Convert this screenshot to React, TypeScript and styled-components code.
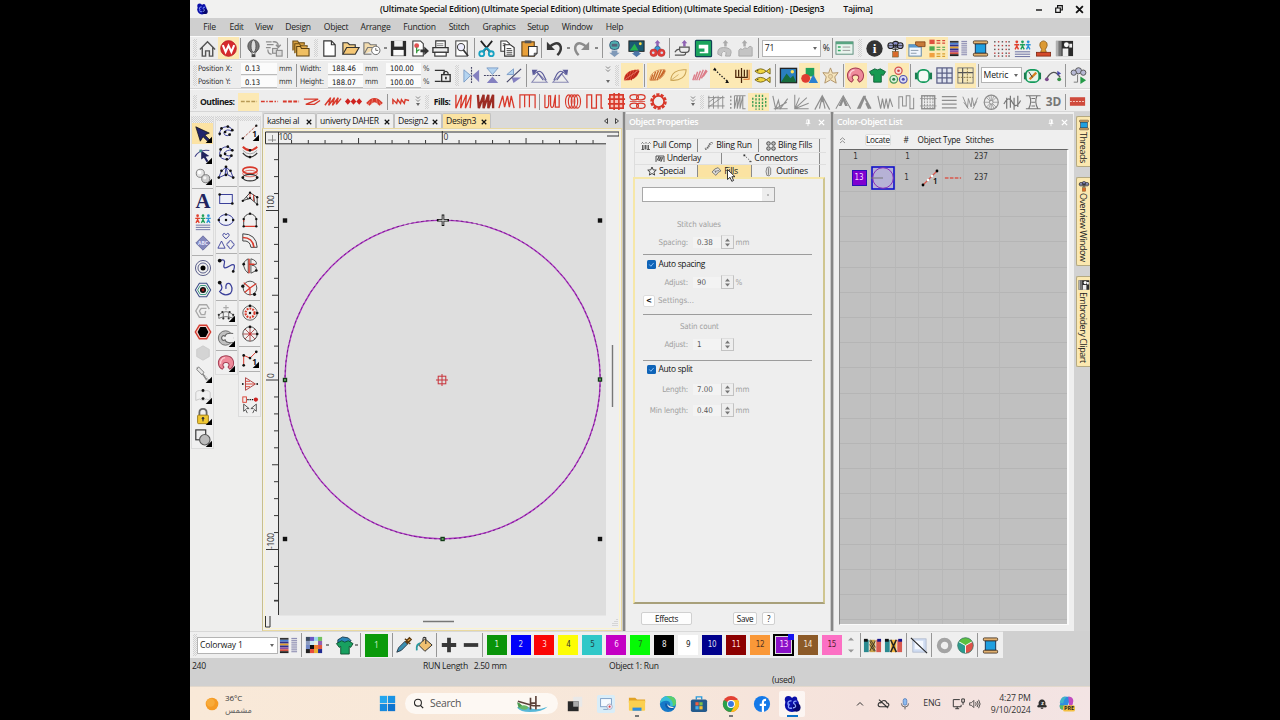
import React from 'react';
import styled, { createGlobalStyle } from 'styled-components';

const Global = createGlobalStyle`
  * { box-sizing: border-box; }
  body { margin: 0; background: #000; overflow: hidden; }
`;

const ui = `"Open Sans", "Noto Sans", sans-serif`;
const tahoma = `"DejaVu Sans Condensed", "DejaVu Sans", sans-serif`;

/* ---------- drawing helpers for 20x20 icons ---------- */
type Shape = (k: number) => React.ReactElement;
const p = (d: string, stroke = 'none', sw = 1, fill = 'none', dash?: string): Shape => (k) => (
  <path key={k} d={d} stroke={stroke} strokeWidth={sw} fill={fill} strokeDasharray={dash} />
);
const f = (d: string, fill: string): Shape => p(d, 'none', 0, fill);
const c = (x: number, y: number, r: number, fill = 'none', stroke = 'none', sw = 1, dash?: string): Shape => (k) => (
  <circle key={k} cx={x} cy={y} r={r} fill={fill} stroke={stroke} strokeWidth={sw} strokeDasharray={dash} />
);
const e = (x: number, y: number, rx: number, ry: number, fill = 'none', stroke = 'none', sw = 1): Shape => (k) => (
  <ellipse key={k} cx={x} cy={y} rx={rx} ry={ry} fill={fill} stroke={stroke} strokeWidth={sw} />
);
const r = (x: number, y: number, w: number, h: number, fill = 'none', stroke = 'none', sw = 1, rx = 0): Shape => (k) => (
  <rect key={k} x={x} y={y} width={w} height={h} rx={rx} fill={fill} stroke={stroke} strokeWidth={sw} />
);
const t = (x: number, y: number, s: string, size: number, fill: string, family = 'Open Sans', weight = 700): Shape => (k) => (
  <text key={k} x={x} y={y} fontSize={size} fill={fill} fontFamily={family} fontWeight={weight} textAnchor="middle" letterSpacing="0">{s}</text>
);
const dots = (pts: number[][], fill = '#111', rad = 1.5): Shape[] => pts.map(([x, y]) => c(x, y, rad, fill));

const RED = '#d8392b', GRY = '#8e8e8e', BLU = '#3a3f9a', NAVY = '#22245e';
const leaf = 'M2 15C2 8 8 3 18 4C18 11 12 16 2 15Z';
const hatch = 'M3 15L5 9M5 15L8 6M7 15L11 5M9.5 15L14 4M12 13L17 4M14 11L18 5';
const shirt = 'M7 3L1.5 6L4 10L6 9V17H14V9L16 10L18.5 6L13 3Q10 5 7 3Z';
const corner = f('M20 13V20H13Z', '#000');
const people = (y: number): Shape[] =>
  [['#e0402e', 4], ['#1fa05a', 10], ['#2a93d8', 16]].flatMap(([col, x]) => [
    c(x as number, y, 1.5, col as string),
    p(`M${(x as number) - 2.6} ${y + 3}H${(x as number) + 2.6}M${x} ${y + 2}V${y + 5}M${x} ${y + 4.5}L${(x as number) - 1.8} ${y + 8}M${x} ${y + 4.5}L${(x as number) + 1.8} ${y + 8}`, col as string, 1.5),
  ]);
const horseshoe = [
  f('M10 1.5C15.5 1.5 19 5.5 19 10C19 13.5 17 16.5 14 17.5L11.5 14.5C13.5 13 13.5 10 10 10S6.5 13 8.5 14.5L6 17.5C3 16.5 1 13.5 1 10C1 5.5 4.5 1.5 10 1.5Z', '#a23a50'),
  f('M10 2.5C15 2.5 18 6 18 10C18 13 16.3 15.5 14.2 16.3L12.8 14.5C15 12.5 14 8.8 10 8.8S5 12.5 7.2 14.5L5.8 16.3C3.7 15.5 2 13 2 10C2 6 5 2.5 10 2.5Z', '#ee8a9a'),
  p('M4 11C3.5 7.5 5.5 4.5 9 4', '#fbd0d6', 1.4),
];
const barsH = [2, 4, 6, 8, 10, 12, 14, 16];
const threads: Shape[] = [
  ...barsH.map((y, i) => r(1, y, 9, 2, ['#333', '#4a7fd0', '#30308a', '#e0a030', '#30308a', '#9050a0', '#d05040', '#222'][i])),
  ...barsH.map((y) => r(13, y, 6, 1.1, '#8a8ab0')),
];
const bust: Shape[] = [
  p('M10 10V14', '#333', 1), r(7, 13, 6, 6, '#d96b2b', '#552', 0.5),
  c(10, 6, 3.5, '#8b8ecb', '#222', 1.1), c(5, 7, 3, '#9ea4cf', '#222', 1.1), c(15, 7, 3, '#9ea4cf', '#222', 1.1), c(10, 7, 1.5, '#333'), p('M2 7H18M7 11L13 11', '#222', 0.8),
];
const upArrow = (x: number, col = '#8f62b4') => f(`M${x} 1L${x + 3} 4.5H${x + 1.3}V8H${x - 1.3}V4.5H${x - 3}Z`, col);
const spool = [r(4.5, 5, 11, 10, '#1f9fe0', '#124', 0.9), r(2.5, 2, 15, 3, '#e0b070', '#432', 0.9, 1), r(2.5, 15, 15, 3, '#e0b070', '#432', 0.9, 1)];

const ICONS: Record<string, Shape[]> = {
  app: [c(10, 11, 8, '#0a0fa8'), c(6, 5, 4, '#0a0fa8'), c(13, 4.5, 2.8, '#0a0fa8'), c(15, 14, 4.5, '#06066e'), p('M9.5 6.5Q5 6 5.5 10Q8 10 6 12Q5.5 15.5 10 14.5M15 7Q11 6.5 12 9.5Q15 11.5 13.5 13.5Q12.5 14.5 11 14', '#8ea6ff', 1.4)],
  home: [p('M2 11L10 3L18 11M4.5 9V18H8V12.5H12V18H15.5V9', '#555', 1.5)],
  w: [c(10, 10, 8.3, '#d62a2e', '#b51c22', 0.7), p('M4 6.5L7 13.5L10 7L13 13.5L16 6.5', '#fff', 2.2)],
  balloon: [e(10, 7.5, 6, 6.5, '#777', '#444', 0.8), e(10, 7.5, 2.6, 6.5, '#ddd', '#444', 0.8), p('M6 12L9 16M14 12L11 16', '#444', 0.8), r(8, 16, 4, 3, '#444')],
  convert: [p('M1 3H7M2 6H9M1 9H6', GRY, 1.4), p('M8 3Q14 2 14 8M11.5 6L14 9L16.5 6', GRY, 1.4), r(8, 10, 5, 5, '#ddd', GRY, 1.2), r(12, 12, 6, 6, '#ddd', GRY, 1.2), p('M3 11Q3 16 7 16', GRY, 1.3)],
  folders: [p('M2 12V2H7L8 4H14V6', '#6b4a10', 1.1, '#d8a040'), p('M4 15V5H9L10 7H17V9', '#6b4a10', 1.1, '#e4ae4c'), p('M6 18V8H10L11 10H19V18Z', '#5c4010', 1.1, '#f0bf62')],
  new: [p('M4 2H12L16 6V18H4ZM12 2V6H16', '#333', 1.2, '#fff')],
  open: [p('M2 16V4H7L9 6H15V9', '#333', 1.2, '#f5cf86'), p('M2 16L6 9H19L15 16Z', '#333', 1.2, '#f5c775')],
  recent: [p('M2 16V4H7L9 6H15V9M2 16L6 9H18', '#777', 1.2, '#f3dcae'), p('M2 16H10', '#777', 1.2), c(14.5, 12, 4.4, '#fff', '#666', 1), p('M14.5 9.5V12H17', '#666', 1)],
  save: [f('M2 2H18V18H2Z', '#2b2b2b'), r(5.5, 2, 9, 6, '#eee'), r(4.5, 11.5, 11, 6, '#fafafa')],
  export: [p('M3 2H11L14 5V18H3Z', '#333', 1.1, '#fff'), c(7, 7, 2.6, '#e05050'), p('M7 9V15M7 13L10 11', '#3a9a40', 1.4), f('M11 11H15V8L20 12.5L15 17V14H11Z', '#333')],
  print: [p('M5 9V2H15V9', '#333', 1.2, '#fff'), p('M2 9H18V14H2Z', '#333', 1.4, '#eee'), r(4, 14, 12, 4, '#fff', '#333', 1.2), p('M6 5H13M6 7H13', '#555', 0.8)],
  preview: [r(4, 2, 12, 16, '#fff', '#444', 1.1), c(9.5, 8.5, 3.8, '#eef', '#444', 1.1), p('M12 11.5L17 18', '#333', 1.8)],
  cut: [p('M4 2L13 13M16 2L7 13', '#222', 1.8), c(5, 15.5, 2.6, 'none', '#18a2c2', 1.9), c(15, 15.5, 2.6, 'none', '#18a2c2', 1.9), p('M10 9L14 13M10 9L6 13', '#18a2c2', 2)],
  copy: [p('M3 2H9L12 5V13H3Z', '#333', 1.1, '#fff'), p('M7 6H13L17 9V18H7Z', '#333', 1.2, '#fff'), p('M9 10H14M9 12H15M9 14H15M9 16H15M5 5H8M5 7H7', '#333', 0.9)],
  paste: [r(2, 3, 13, 15, '#e8a03a', '#5c3c10', 1.1), r(5, 1.5, 7, 3, '#555'), p('M9 8H18V15L15 18H9Z', '#333', 1.1, '#fff'), p('M15 18V15H18', '#333', 1)],
  undo: [p('M5 8Q14 1 16.5 8Q17.5 13 13 17', '#383838', 2.6), f('M2 3V11.5H10.5Z', '#383838')],
  redo: [p('M15 8Q6 1 3.5 8Q2.5 13 7 17', '#8c8c8c', 2.6), f('M18 3V11.5H9.5Z', '#8c8c8c')],
  mach1: [r(5, 2, 10, 9, '#4eb0b0', '#357', 1, 4), r(7, 5, 6, 3, '#55627a'), f('M7 12H13V14.5H15.5L10 19L4.5 14.5H7Z', '#7f99b8')],
  mach2: [r(2, 2, 16, 11, '#1b5a72', '#222', 1), f('M3 12L8 5L12 12Z', '#28b450'), f('M7 13H13V15H15L10 19L5 15H7Z', '#4c76a8'), c(14, 5, 1.5, '#fd4')],
  mach3: [upArrow(10), c(10, 10.5, 3, '#3b9ad6', '#246', 0.6), c(6, 14.5, 4, '#df3d3a', '#a22', 0.5), c(14, 14.5, 4, '#df3d3a', '#a22', 0.5), c(5.5, 14.5, 1.4, '#cde'), c(14.5, 14.5, 1.4, '#cde')],
  cup: [upArrow(12), p('M7 8.5H17V11Q17 14 14 14H10Q7 14 7 11ZM2 14Q4 10 7 11M2 17H11Q14 17 13 14', '#555', 1.3)],
  sew: [r(1.5, 1.5, 17, 17, '#1aa35c', '#145', 1.2, 1), f('M5 6H15V15H6V13.5H11V10H5Z', '#fff')],
  up1: [upArrow(11, '#aaa'), p('M3 16Q2 9 9 9Q17 9 17 14L16 18H11Q13 13 9 13Q6 14 7 18Z', '#aaa', 1, '#c4c4c4')],
  up2: [upArrow(9, '#aaa'), p('M3 18V12Q4 9 7 11Q9 8 12 10Q15 6 17 9V18Z', '#aaa', 1, '#c4c4c4')],
  dialog: [r(1, 3, 18, 13, '#e9f4ee', '#5b8d7c', 1), r(1, 3, 18, 2.5, '#59a582'), p('M3 8.5H6M3 12H6', '#2fa860', 1.6), p('M8 8.5H16M8 12H16', '#999', 1)],
  info: [c(10, 10, 8.6, '#333'), t(10, 15, 'i', 14, '#fff', 'Liberation Serif')],
  bust,
  props: [r(2, 6, 13, 12, '#f0f6fd', '#5a84a8', 1), r(2, 6, 13, 3, '#5a98cc'), p('M4 12H12M4 15H10', '#89a', 1), p('M9 3H19V8L12 8L9 6Z', '#7a3c10', 0.8, '#c87a38')],
  list: [...[3, 10, 17].flatMap((y, i) => [r(1.5, y - 2.3, 5.5, 4.6, ['#e05040', '#50a850', '#f0a040'][i]), p(`M9 ${y - 1.3}H13M9 ${y + 1.3}H13M15 ${y - 1.3}H18M15 ${y + 1.3}H18`, ['#d84838', '#48a048', '#d8a030'][i], 1.2)])],
  threads, spool,
  dotgrid: [3, 7, 11, 15, 18].flatMap((y, j) => [3, 7, 11, 15, 18].map((x, i) => r(x - 0.8, y - 0.8, 1.5, 1.5, (i + j) % 2 ? '#c04040' : '#555'))),
  people: [...people(3), p('M2 13.5H18M2 16H18M2 18.5H18', '#666c9e', 1)],
  stamp: [p('M8 11Q5 7 6.5 4Q10 0 13.5 4Q15 7 12 11L13 14H7Z', '#8a5a18', 0.8, '#dc9a34'), r(2.5, 14, 15, 4, '#d44a2c', '#7c2410', 0.8)],
  clip: [r(1, 2, 18, 16, '#2a2a2a'), r(1, 2, 3, 16, '#b0b0b0'), r(4, 2, 3, 16, '#777'), r(8, 10, 6, 8, '#eee'), c(12, 6, 2.6, '#fafafa'), r(15, 5, 3, 4, '#eee')],
  lock2: [p('M1 4H12V8M1 17H8', '#333', 1.4), r(9, 9, 10, 8, '#eee', '#333', 1.6), p('M11.5 9V7Q14 3.5 16.5 7V9', '#333', 1.4), r(13, 11.5, 2, 3, '#333')],
  mirh: [p('M2 4L9 10L2 17Z', '#7498c4', 0.9, '#b4d4f0'), f('M18 4L11 10L18 17Z', '#8480c0'), p('M10 1V19', '#446', 1.2, 'none', '2 1')],
  mirv: [p('M4 2H16L10 9Z', '#7498c4', 0.9, '#b4d4f0'), f('M4 18H16L10 11Z', '#8480c0'), p('M1 10H19', '#446', 1.2, 'none', '2 1')],
  mird: [p('M3 9L10 3V9Z', '#7498c4', 0.9, '#b4d4f0'), f('M8 12H18L10 18Z', '#8480c0'), p('M3 17L18 3', '#446', 1.2)],
  rotl: [p('M2 17H18L9 8Z', '#8a8ab4', 1.1), p('M4 9Q10 2 14 9L17 15M7 6L14 15', '#5a5a9a', 1.2), f('M2 4L8 4L3 10Z', '#5a5a9a')],
  rotr: [p('M2 17H18L11 8Z', '#8a8ab4', 1.1), p('M16 9Q10 2 6 9L3 15M13 6L6 15', '#5a5a9a', 1.2), f('M18 4L12 4L17 10Z', '#5a5a9a')],
  leafA: [f(leaf, '#dd4a34'), p(hatch, '#b8241a', 1.2), p('M2 15L18 4', '#f4a090', 0.6)],
  leafB: [p(hatch, '#c8682c', 1.4), p(leaf, '#c8682c', 0.6)],
  leafC: [p(leaf, '#c9a253', 1.1), p('M2 15L10 9', '#c9a253', 0.8)],
  leafD: [p(hatch, '#dc7c88', 1.5)],
  dashpt: [p('M4 4L17 16', '#222', 1.4, 'none', '1.5 1.7'), f('M2 4.5L4 1.5L6 4.5Z', '#111'), f('M15 18L17 14.5L19 18Z', '#111')],
  fork: [p('M4 4V12H16V4M10 2V18M7 4V11M13 4V11', '#4a2408', 1.3), p('M12 14H18V4', '#d86820', 1.1)],
  fish: [...[5.5, 14.5].flatMap((y) => [p(`M2 ${y}Q8 ${y - 5} 14 ${y}L18 ${y - 3}V${y + 3}L14 ${y}Q8 ${y + 5} 2 ${y}Z`, '#6c5a10', 0.9, '#f0d640'), c(5, y - 0.5, 0.7, '#222')])],
  picture: [r(1.5, 2.5, 17, 15, '#2a7fc0', '#222', 1.4), f('M2 17L8 8L12 13L15 10L18 17Z', '#186c3c'), c(14, 6, 1.8, '#ffe25a')],
  shapes: [r(6, 2, 9, 9, '#1fa05a'), c(6, 13, 4.7, '#e03c30'), f('M9 18L14 9L19 18Z', '#2a80d0')],
  star: [p('M10 2L12 7.5L18 7L14.5 11.5L16 18L10 14.5L4 18L5.5 11.5L2 7L8 7.5Z', '#b09468', 1, '#f5e4bc'), c(10, 11, 2.2, '#ecd8ac', '#b09468', 0.6)],
  horseshoe,
  shirt: [p(shirt, '#0c5c34', 0.9, '#169a52')],
  trefoil: [c(10, 5, 3.8, '#f6dede', '#d25050', 1.3), c(5, 14, 4, '#d8f0dc', '#489858', 1.3), c(15, 14, 4, '#dcdcf6', '#5454b0', 1.3), c(10, 5, 1.4, '#d04040'), c(5, 14, 1.6, '#308048'), c(15, 14, 1.6, '#5050b0')],
  hoop: [r(4, 4, 12, 13, '#f4faf6', '#149a5c', 1.8, 5), r(1, 7, 2.5, 7, '#1b7d50'), r(16.5, 7, 2.5, 7, '#1b7d50')],
  grid: [r(2, 2, 16, 16, '#e0e4f0', '#5a5f86', 1.3), p('M2 7.5H18M2 12.5H18M7.5 2V18M12.5 2V18', '#5a5f86', 1.3)],
  gridr: [r(2, 2, 16, 16, '#f6e8b8', '#777', 1), p('M7 2V18M2 7H18', '#555', 1.2), p('M2 12H18M12 2V18', '#8c7c4c', 1, 'none', '2 1')],
  hoopn: [r(3, 4, 14, 13, '#e6f4ea', '#149a5c', 1.8, 5), r(1, 7, 2, 7, '#1b7d50'), r(17, 7, 2, 7, '#1b7d50'), p('M7 14L14 7', '#d88020', 2.4), p('M6 6L10 12', '#333', 1)],
  curve: [p('M3 13Q10 1 17 12', '#555', 1.4), c(3, 14, 2, '#7a4a8a'), c(16, 14, 2, '#389048'), f('M14 5L18 8L14 10Z', '#44a')],
  bustgo: [c(10, 5, 3.2, '#b6b8d4', '#555', 1), c(5, 7, 2.8, '#b6b8d4', '#555', 1), c(15, 7, 2.8, '#b6b8d4', '#555', 1), p('M9 9V17H5', '#777', 1), f('M12 11L18 15L12 19Z', '#259a48')],
  /* outline stitches */
  o1: [p('M2 10H19', '#b89a56', 1.5, 'none', '4 1.5')],
  o2: [p('M1 10H19', RED, 1.8, 'none', '4 1.6 1.5 1.6')],
  o3: [p('M2 10H19', RED, 2, 'none', '4 1.5')],
  o4: [p('M2 7.5H17L4 13H13L19 9', RED, 1.4)],
  o5: [p('M2 14L8 6L6 14L12 6L10 14L16 6L14 13L19 7', RED, 1.5)],
  o6: [f('M1 10L4 6.5L7 10L4 13.5ZM7 10L10 6.5L13 10L10 13.5ZM13 10L16 6.5L19 10L16 13.5Z', '#cf2320')],
  o7: [p('M3 13Q10 4 17 13', RED, 4.6), p('M5 10L3 14M8 7L7 13M12 7L13 13M15 10L17 14', '#f0968a', 0.7)],
  o8: [p('M2 13V8L6 12L7 8L10 12L11 8L14 12L15 8L19 9', RED, 1.5)],
  /* fill stitches */
  f1: [p('M2 3V17L8 3L7 17L13 3L12 17L18 3L17 17', RED, 1.4)],
  f2: [p('M2 3L3 17L8 3V17L13 3V17L18 3V17', '#9c2c24', 2.5)],
  f3: [p('M2 17L6 4L8 16L11 4L13 16L15 4L18 17', RED, 1.4)],
  f4: [p('M2 17V3H18V17M7 3V16M12 3V16', RED, 1.3)],
  f5: [p('M2 3V16Q6 18 6 12V4H8V14Q9 18 11 15L13 3V16H17V3', RED, 1.3)],
  f6: [e(5, 10, 3.4, 7, 'none', RED, 1.2), e(8, 10, 3.4, 7, 'none', RED, 1.2), e(11, 10, 3.4, 7, 'none', RED, 1.2), e(14, 10, 3.4, 7, 'none', RED, 1.2)],
  f7: [p('M2 17V3H7V17H12V3H17V17H19', RED, 1.4)],
  f8: [r(3, 3, 14, 14, '#f7c4bc', RED, 1.8), p('M7.5 1V19M12.5 1V19M1 7.5H19M1 12.5H19', RED, 1.7)],
  f9: [...[5.5, 14.5].flatMap((y) => [e(6.5, y, 4.5, 2.8, 'none', RED, 1.3), e(13.5, y, 4.5, 2.8, 'none', RED, 1.3)]), p('M2 10H18', RED, 0.8)],
  f10: [c(10, 10, 7.2, 'none', RED, 3, '3.2 1.3'), c(10, 10, 5.9, 'none', RED, 1.8)],
  /* effect toolbar */
  g1: [p('M2 3V17M7 3V17M12 3V17M17 3V17M1 5H19M1 14H19M2 15L17 4M2 10L10 4', GRY, 1)],
  g2: [p('M3 3V17', GRY, 1.5, 'none', '2 2'), p('M7 3V17L10 3V17L13 3V17L16 3V17H19M7 3H19', GRY, 1.1)],
  g3: [...[3, 6.5, 10, 13.5, 17].map((x, i) => p(`M${x} ${i % 4 ? 2 : 5}V${i % 4 ? 18 : 15}`, '#3a9c54', 1.5, 'none', '2.4 1.3'))],
  g4: [p('M2 3L5 17L8 8L10 17L18 6M3 17H18M5 17L17 10', GRY, 1.2)],
  g5: [p('M3 2V17H18M3 17L8 5M3 17L16 5M3 17L18 11', GRY, 1.1)],
  g6: [p('M2 18L10 3L18 18M7 17L10 3L13 17M10 3V10', GRY, 1.3)],
  g7: [p('M2 17L10 3L18 17', GRY, 1.1), f('M5 14L10 3L15 14H12L10 9L8 14Z', GRY)],
  g8: [f('M2 17L9 3L12 3L6 17Z', GRY), p('M10 4L17 17M12 11L15 17', GRY, 2)],
  g9: [p('M2 3L5 17L7 6L9 17L11 6L13 17L15 6L18 15', GRY, 1.2)],
  g10: [p('M2 17V4H6V14H10V3H14V17H18V5', GRY, 1.1)],
  g11: [r(3, 3, 14, 14, 'none', GRY, 1.5), p('M6 3V17M9 3V17M12 3V17M15 3V17', GRY, 1, 'none', '2 1'), p('M1 6H19M1 14H19', GRY, 0.8)],
  g12: [p('M2 4H18M2 8H18M2 12H18M2 16H18', GRY, 1.3)],
  g13: [p('M2 4L7 16L8 6L11 15L12 5L14 14L18 5M3 10L8 17M13 17L17 9', GRY, 1)],
  g14: [c(10, 10, 7.6, 'none', GRY, 1.3), p('M10 2V18M2 10H18M4.3 4.3L15.7 15.7M15.7 4.3L4.3 15.7M7 3L13 17M13 3L7 17', GRY, 0.8), c(10, 10, 2, '#eee', GRY, 1)],
  g15: [p('M1 12Q6 2 10 10T19 8M4 5V17M8 3V16M12 5V18M16 3V15', '#777', 1.3)],
  g16: [p('M2 3H18M2 17H18M6 3Q9 10 5 17M14 3Q11 10 15 17M8 6H12M8 10H12M8 14H12', '#777', 1.2)],
  g17: [t(10, 15, '3D', 12.5, '#777')],
  band: [r(2, 5.5, 16, 9, '#cf4a3c'), p('M2 10H18', '#f7c8c0', 1.2, 'none', '2 1.2')],
  /* palette 1 */
  pick: [p('M2 2L17 9L12 11L18 17L15.5 18.5L10 13L7 18Z', '#111', 0.8, '#22246c'), corner],
  reshape: [p('M1 12Q6 3 17 5', '#448', 1.2), f('M8 5L17 11L13 12L16 17L14 18L11 13L8 15Z', NAVY), r(6, 4, 3, 3, '#3a8a8a'), corner],
  coins: [c(7, 7, 4.5, '#e4e4e4', '#777', 1), c(13, 13, 4.5, '#ccc', '#777', 1), c(6, 6, 2, '#fff'), c(12, 12, 1.8, '#f4f4f4'), corner],
  A: [t(10, 18, 'A', 23, NAVY, 'Liberation Serif')],
  badge: [p('M10 2L18 10L10 18L2 10Z', '#5a5f96', 0.8, '#8488bc'), t(10, 12, 'ABC', 5.5, '#e8e8ff')],
  target: [c(10, 10, 8.4, 'none', '#4c5080', 1), c(10, 10, 5.6, 'none', '#4c5080', 1), c(10, 10, 2.8, '#000')],
  hexT: [p('M6 2.5H14L18.5 10L14 17.5H6L1.5 10Z', '#3d4d88', 1.2), p('M7 5H13L16 10L13 15H7L4 10Z', '#3f9c80', 1.1), c(10, 10, 3.4, '#111'), c(10, 10, 1.6, '#a32020')],
  hexS: [p('M17 8L14 3H6L2 10L6 17H13M14 7H8L6 10L8 14H12L13 10', '#a8a8a8', 1.5)],
  hexB: [p('M6 2.5H14L18.5 10L14 17.5H6L1.5 10Z', '#d43c30', 1.6, '#f6d0cc'), f('M7 4.5H13L16 10L13 15.5H7L4 10Z', '#000')],
  hexG: [p('M10 2L17 6V14L10 18L3 14V6Z', '#c6c6c6', 0.8, '#d4d4d4')],
  knife: [p('M3 3L9 9L14 17', '#888', 1.3), p('M5 2L11 8L9 11L3 5Z', '#777', 1, '#e8e8e8'), p('M10 10L17 18', '#888', 1.8, 'none', '1 1'), corner],
  book: [p('M2 16V7Q6 3 10 7Q14 3 18 7V16Q14 13 10 16Q6 13 2 16Z', '#c4c4c4', 1), ...dots([[10, 5], [10, 14]], '#111', 1.6), corner],
  padlock: [p('M6 9V6Q6 2 10 2T14 6V9', '#666', 2), r(4, 9, 12, 9.5, '#f0c832', '#97761a', 1, 1), c(10, 12.5, 1.4, '#333'), r(9.4, 13, 1.2, 3, '#333'), corner],
  overlap: [r(2, 1, 11, 11, '#eee', '#333', 1.3), c(12, 12, 5.8, '#bbb', '#555', 1.2), corner],
  /* palette 2 */
  c1: [p('M3 14Q2 4 12 4Q18 6 16 9Q11 6 8 10Q7 14 12 14L15 12', BLU, 1.1), ...dots([[3, 12], [5, 6], [12, 4], [17, 8], [9, 10], [14, 13]])],
  c2: [p('M13 17Q2 18 3 10Q4 3 12 3L17 7Q11 6 8 10Q9 14 16 13Z', BLU, 1.1), ...dots([[4, 13], [4, 6], [12, 3], [17, 7], [9, 11], [16, 13], [11, 17]])],
  c3: [p('M2 14Q3 7 10 2Q17 7 18 14L12 11L10 2L9 11L2 14', BLU, 1.1), ...dots([[2, 14], [10, 2], [18, 14], [10, 11], [5, 6.5], [15, 6.5]])],
  rect: [r(3, 5, 14, 10, '#eef0f8', BLU, 1.1), ...dots([[3, 5], [17, 15]])],
  ell: [e(10, 10, 8, 6, '#eef0f8', BLU, 1.1), ...dots([[2, 10], [10, 10], [18, 10], [10, 4]], '#111', 1.4)],
  shp: [p('M10 7.5Q4 3 8 1.5L10 3L12 1.5Q16 3 10 7.5Z', BLU, 1), p('M1 18L5 10L9 18Z', BLU, 1), p('M12 12H13Q13 9.5 15 9.5T17 12Q19 12 19 14T17 16Q17 18.5 15 18.5T13 16Q11 16 11 14T12 12Z', BLU, 1)],
  squig: [p('M3 4Q10 1 8 8T14 10T18 16', BLU, 1.4), ...dots([[3, 4]], '#111', 2.1), ...dots([[18, 16]])],
  blob: [p('M3 4Q8 10 3 14Q8 20 15 16Q19 10 14 5Q9 4 10 11', BLU, 1.4), ...dots([[3, 4]], '#111', 2.1)],
  arch: [p('M2 16V12Q10 5 18 12V16Q10 12 2 16ZM7 10V15M13 10V15', '#777', 1.1), p('M10 1V7M7 4H13', '#aaa', 1.2), ...dots([[2, 12], [18, 12], [6, 9], [14, 9], [7, 16], [13, 16]], '#333', 1.2), corner],
  pac: [c(9.5, 10, 8, '#c0c0c0', '#666', 1), p('M18 5Q10 4 9 8Q6 6 5 10Q6 14 9 12Q10 16 18 15', '#666', 1.2, '#f0f0f0'), corner],
  shoe: [...horseshoe, corner],
  /* palette 3 */
  run: [p('M2 17L17 3', '#b05040', 1, 'none', '3 1.5'), ...dots([[2, 17], [17, 3]], '#111', 1.3), t(15, 16, '1', 9, '#111'), corner],
  smile: [p('M2 3Q10 11 18 3', RED, 2.2), p('M2 10Q10 19 18 10', '#333', 1.3), p('M2 7Q10 15 18 7', '#777', 0.7), ...dots([[10, 7], [10, 14.5]])],
  rings: [e(10, 6, 8, 3.6, 'none', RED, 1.8), e(10, 9.5, 8, 3.6, 'none', RED, 0.8), e(10, 14, 8, 3.6, 'none', '#333', 1.2), ...dots([[2, 14], [18, 14]])],
  mtn: [p('M2 12L10 3L18 8L18 16L10 9L2 12M6 7L8 11M14 6L15 13', '#444', 1.1), p('M10 3V9M14 5V12', RED, 1), ...dots([[2, 12], [10, 3], [18, 8], [18, 16], [10, 9]], '#111', 1.3)],
  house: [p('M3 17V9Q4 4 10 3Q16 4 17 9V17', '#444', 1.1), p('M3 17H17M3 12V9', RED, 1.3), ...dots([[3, 17], [3, 9], [10, 3], [17, 9], [17, 17]], '#111', 1.3)],
  pipe: [p('M2 2Q17 2 18 17M2 10Q10 9 11 17M2 2V10M11 17H18', '#444', 1.1), p('M2 6Q13 6 14.5 17', RED, 1.7)],
  bb: [p('M8 2Q2 5 3 10T8 18V2M11 2Q18 4 17 8L12 9Q18 10 17 15L11 18Z', '#444', 1), p('M9 2V18M9 8H15', RED, 1.5), ...dots([[3, 8], [17, 15]])],
  yy: [c(10, 10, 7.6, 'none', '#444', 1), p('M3 4L10 10L17 5M10 10V18M10 10L4 15', RED, 1.3), ...dots([[2, 8], [15, 17]], '#111', 1.8)],
  wheel: [c(10, 10, 8, 'none', '#444', 0.9), c(10, 10, 5, 'none', RED, 2.4, '2 1.2'), c(10, 10, 1.4, '#111'), ...dots([[10, 2], [18, 10]])],
  spokes: [c(10, 10, 8, 'none', '#444', 1), p('M10 2V18M2 10H18M4.5 4.5L15.5 15.5M15.5 4.5L4.5 15.5', '#a84848', 1), c(10, 10, 1.6, '#c33'), ...dots([[10, 2], [18, 10]])],
  poly: [p('M3 17V6L10 9L17 2', RED, 1.1), ...dots([[3, 17], [3, 6], [10, 9], [17, 2]]), t(15, 17, '1', 9, '#111'), corner],
  tri: [p('M5 3V17L16 10Z', '#b04848', 1.1), p('M5 7H10M5 10H15M5 13H10', RED, 1), ...dots([[2, 10], [18, 10]], '#111', 1)],
  pts: [r(2, 1, 4, 6, 'none', RED, 1), p('M7 4H14', '#111', 1.6, 'none', '1.5 1'), c(16.5, 4, 2.4, '#c22'), p('M3 9V17L5 15L7 19M3 9L9 14H6M17 9V17L15 15L13 19M17 9L11 14H14', '#555', 1.1)],
  /* tab icons */
  pull: [p('M1 5L3 3L5 5M8 5L10 3L12 5M15 5L17 3L19 5M3 8V17M6 8V17M9 8V17M12 8V17M15 8V17M1 17H6M12 17H18', '#444', 1.7)],
  bling: [p('M2 16Q8 14 10 9T18 4', '#666', 4, 'none', '3 1'), c(4, 14, 1.3, '#eee'), c(15, 5, 1.3, '#eee')],
  blings: [5, 15].flatMap((y) => [5, 15].map((x) => c(x, y, 3.6, '#bbb', '#444', 1.8))),
  under: [p('M2 16V4H18V16M4 13L8 5V14L12 6V15L16 6', '#444', 1.8)],
  conn: [p('M3 3L18 17', '#333', 1.8, 'none', '2.5 3'), r(1, 1, 4, 4, '#333'), p('M14 17H19', '#333', 2)],
  starO: [p('M10 2L12.4 7.7L18.5 8.2L13.9 12.2L15.3 18.2L10 15L4.7 18.2L6.1 12.2L1.5 8.2L7.6 7.7Z', '#333', 1.8)],
  fillI: [p('M2 11Q6 4 13 3L18 9Q13 10 9 17Z', '#666', 1.5, '#e4e4e4'), p('M7 10L15 8M9 13L7 8', '#666', 1.4)],
  outl: [p('M7 3Q13 0 14 5V15Q12 20 7 17Q4 10 7 3Z', '#666', 1.3, '#ddd'), p('M10 4V16', '#777', 1.5)],
  /* colour bar */
  mosaic: ['#3a4a60', '#6b56c4', '#9ad6ee', '#70c060', '#8a9ac0', '#c8e8f4', '#e8f0e0', '#9060b0', '#7088c8', '#101010', '#f08030', '#e05840', '#202020', '#e84c3c', '#e8b030', '#202a90'].map((k, i) => r(1 + (i % 4) * 4.5, 1 + Math.floor(i / 4) * 4.5, 4.5, 4.5, k)),
  shirts: [p('M8 1L3 4L3 8H13L17 5L14 2Z', '#134', 0.9, '#2a86b8'), p('M7 5L1.5 8L4.5 12L6 11V19H15V11L16.5 12L19 8L14 5Q10 8 7 5Z', '#0b4a2a', 0.9, '#18a060')],
  dropper: [p('M2 18L4 13L11 6L14 9L7 16Z', '#234', 1, '#3a8fb0'), p('M11 3L17 9M12 6L16 2L18 4L14 8Z', '#5c3a10', 1.5, '#e0a040')],
  bucket: [p('M4 10L11 3L19 10L11 17Z', '#333', 1.1, '#f0c070'), p('M9 6Q8 0 12 2V9', '#333', 1.2), p('M6 8Q1 9 2 16', '#2a9aa0', 2)],
  plus: [p('M10 2V18M2 10H18', '#383838', 4.2)],
  minus: [p('M2 10H18', '#383838', 4.2)],
  rem1: [r(1, 4, 5, 13, '#2a8a90'), r(14, 4, 5, 13, '#d85a50'), r(7, 4, 6, 13, '#c8a24a'), p('M7 5L13 16M13 5L7 16M7 9L12 16M8 4L13 12', '#222', 0.8), r(1, 3, 4, 3, '#111'), r(15, 3, 4, 3, '#14148c')],
  rem2: [r(1, 4, 5, 13, '#2a8a90'), r(14, 4, 5, 13, '#d85a50'), r(7, 4, 6, 13, '#f4b840'), p('M7 4L13 17M13 4L7 17', '#222', 1.6), r(1, 3, 4, 3, '#111'), r(15, 3, 4, 3, '#14148c')],
  nofill: [r(4, 3, 14, 14, '#cfdcf2', '#aab4c8', 0.8), r(6, 5, 9, 9, '#f4f8ff'), p('M2 2L19 18', '#222', 1.2)],
  ring: [c(10, 10, 6, 'none', '#a4a4a4', 4.2)],
  pie: [c(10, 10, 8.2, '#2a9c90'), f('M10 10L2.9 6A8.2 8.2 0 0 0 10 18.2Z', '#2a9c90'), f('M10 10L2.9 6A8.2 8.2 0 0 1 17.1 6Z', '#5cc040'), f('M10 10L17.1 6A8.2 8.2 0 0 1 10 18.2Z', '#e0524a'), p('M10 10V18.2M10 10L2.9 6M10 10L17.1 6', '#fff', 1), c(10, 10, 8.2, 'none', '#476', 0.8)],
  /* taskbar */
  sun: [c(10, 10, 9, '#f59b25'), c(8, 8, 6, '#f8ab3a')],
  win: [r(1, 1, 8.5, 8.5, '#25a7ee'), r(10.5, 1, 8.5, 8.5, '#1a93e4'), r(1, 10.5, 8.5, 8.5, '#168ade'), r(10.5, 10.5, 8.5, 8.5, '#0e74cf')],
  loupe: [c(9, 8.5, 6.3, 'none', '#222', 1.9), p('M13.5 13.5L18.5 18.5', '#222', 2.2)],
  tasks: [r(8, 2, 10, 11, '#e9e9e9'), r(2, 7, 12, 11, '#292929'), r(8, 7, 6, 6, '#aaa')],
  snip: [r(0, 0, 20, 20, '#d9edf8', 'none', 0, 2), r(4, 4, 12, 9, '#f6fbff', '#7a9cc4', 1), p('M7 16H12', '#7a9cc4', 1), c(14, 13, 3, '#eef', '#99a', 0.8), c(14, 13, 1.2, '#d44')],
  files: [f('M1 3H8L10 5H19V9H1Z', '#e2a326'), r(1, 6, 18, 11.5, '#fbd050', 'none', 0, 1), r(5, 14, 10, 3.5, '#2d8de0')],
  edge: [c(10, 10, 9, '#1679c8'), f('M1 10Q2 1 10 1Q19 1 19 8Q19 13 13 12.5Q11.5 11.5 12.5 10Q12 6.5 8 6.5Q3.5 6.5 1 10Z', '#38bfd8'), f('M8 1.3Q18 0 19 8Q19 12 15 12.5Q17 6 8 1.3Z', '#5ccf6a'), p('M8 9.5Q7 15 16 15', '#0d58a8', 2.4), f('M9.5 9.5Q9.5 13 17 13.5Q12 16 9.5 12Z', '#f4ebe2')],
  store: [p('M7 5V2H13V5', '#2b9bdc', 1.5), r(1, 5, 18, 14, '#245a8c', 'none', 0, 2), r(6, 8, 3.6, 3.6, '#f06040'), r(10.4, 8, 3.6, 3.6, '#7cc04c'), r(6, 12.4, 3.6, 3.6, '#40b0f0'), r(10.4, 12.4, 3.6, 3.6, '#f8c030')],
  chrome: [c(10, 10, 9, '#e34133'), f('M10 10L2.2 5.5A9 9 0 0 0 10 19L13.9 12.2Z', '#2aa04c'), f('M10 19A9 9 0 0 0 17.8 5.5H10L13.9 12.2Z', '#f9c31c'), c(10, 10, 4.4, '#fff'), c(10, 10, 3.3, '#3b78e0')],
  fb: [c(10, 10, 9, '#1479e8'), p('M11 19V8Q11 5 14.5 5.4M7.5 11H14.5', '#fff', 2.4)],
  chev: [p('M4 13L10 7L16 13', '#333', 2)],
  cloud: [p('M5 15Q1 14 2 11Q3 8 6 9Q8 4 13 6Q15 8 15 9Q19 10 18 13Q17 15 15 15ZM3 4L17 17', '#333', 1.8)],
  mic: [r(7, 1, 6, 11, '#8dbcf0', '#4a74b4', 1.2, 3), p('M4 9Q4 15 10 15T16 9M10 15V19', '#555', 1.4)],
  net: [p('M12 4H2V15H14V12M5 18H11M8 15V18', '#333', 1.5), p('M15 3H19V8H15ZM17 8V12', '#333', 1.5)],
  vol: [p('M1 8H4L8 4V16L4 12H1Z', '#333', 1.3), p('M11 7Q13 10 11 13M13.5 5Q17 10 13.5 15M16 3Q21 10 16 17', '#333', 1.4)],
  bell: [p('M3 15V13L5 11V7Q6 3 10 3T15 7V11L17 13V15Z', '#222', 1.2, '#333'), p('M8 17H12', '#222', 1.8), t(11, 12, 'z', 9, '#eee')],
  copilot: [f('M7 2H13Q15 2 14 5L11 14Q10 17 7 17H5Q2 17 2 13Q3 3 7 2Z', '#2f8ce0'), f('M12 2H14Q18 3 18 7Q17 16 13 17H9Q12 16 13 11Z', '#c04cc0'), f('M2 9Q3 3 7 2H10Q7 5 6 10Z', '#40b4c8'), f('M2 12H8L7 17H5Q2 17 2 12Z', '#58b860'), r(6, 12, 14, 7.5, '#f4c040', 'none', 0, 2), t(13, 18.2, 'PRE', 6.5, '#222')],
  boat: [f('M0 14Q8 10 14 14T34 13Q28 19 14 19Q4 19 0 14Z', '#58b8d8'), f('M0 8Q3 8 6 12L2 15Z', '#4a9a50'), f('M2 14Q8 9 13 14Q9 19 2 14Z', '#68b868'), p('M1 7L18 12H26M15 3V16M21 1V16M15 9L21 9', '#5b4038', 1.8)],
  pin: [p('M7 2H13V11H7ZM4 11H16M10 11V18', '#fff', 2), r(10, 2, 3, 9, '#fff')],
};

const Svg = styled.svg<{ $s: number; $w?: number }>`
  width: ${(q) => q.$w ?? q.$s}px; height: ${(q) => q.$s}px; flex: none; display: block; overflow: visible;
`;
const Icon = ({ n, s = 18, vw = 20 }: { n: string; s?: number; vw?: number }) => (
  <Svg $s={s} $w={(s * vw) / 20} viewBox={`0 0 ${vw} 20`}>{ICONS[n].map((fn, i) => fn(i))}</Svg>
);

/* ---------- shell ---------- */
const Screen = styled.div`width: 1280px; height: 720px; background: #000; display: flex; justify-content: center;`;
const Window = styled.div`
  width: 900px; height: 720px; background: #efefef; display: flex; flex-direction: column;
  font: 8.6px/1.2 ${ui}; letter-spacing: -0.3px; color: #161616; overflow: hidden; white-space: pre;
`;
const TitleBar = styled.header`
  height: 18px; display: flex; align-items: center; background: #f1f1f0; padding-left: 6px; font-weight: 600; flex: none;
`;
const TitleText = styled.div`margin-left: 172px; width: 491px; display: flex; gap: 19px; font-size: 8.8px; color: #111; letter-spacing: -0.28px;`;
const WinButtons = styled.div`display: flex; margin-left: auto; gap: 12px; padding-right: 6px;`;
const MenuBar = styled.nav`height: 18px; background: #cfcfcf; display: flex; align-items: center; padding-left: 2px; flex: none;`;
const MenuItem = styled.span<{ $w: number }>`width: ${(q) => q.$w}px; text-align: center; color: #222; flex: none;`;

const Toolbar = styled.div<{ $h: number; $pt?: number }>`
  height: ${(q) => q.$h}px; padding-top: ${(q) => q.$pt ?? 0}px; display: flex; align-items: stretch; background: #ededed; border-top: 1px solid #fafafa; border-bottom: 1px solid #d6d6d6; flex: none;
`;
const Tool = styled.span<{ $hl?: boolean; $w?: number }>`
  width: ${(q) => q.$w ?? 21.15}px; flex: none; display: flex; align-items: center; justify-content: center;
  background: ${(q) => (q.$hl ? '#fce9b4' : 'transparent')};
`;
const Sep = styled.i<{ $w?: number }>`
  width: ${(q) => q.$w ?? 4.2}px; flex: none; display: flex; justify-content: center; padding: 1px 0;
  &::after { content: ''; width: 1px; background: #969696; }
`;
const Grip = styled.i<{ $w?: number }>`
  width: ${(q) => q.$w ?? 8}px; flex: none; padding: 2px 0 2px 3px;
  &::after { content: ''; display: block; width: 4px; height: 100%; background: repeating-conic-gradient(#d2d2d2 0 25%, #efefef 0 50%) 0 0 / 2px 2px; }
`;
const Space = styled.i<{ $w: number }>`width: ${(q) => q.$w}px; flex: none;`;
const Caret = styled.i<{ $w: number }>`
  width: ${(q) => q.$w}px; flex: none; display: flex; align-items: center; justify-content: center;
  &::after { content: ''; width: 3px; height: 1.5px; background: #888; }
`;
const Overflow = styled.span`
  width: 8px; flex: none; display: flex; flex-direction: column; align-items: center; justify-content: space-between; padding: 3px 0 5px;
`;
const Combo = styled.span<{ $w: number; $h: number }>`
  width: ${(q) => q.$w}px; height: ${(q) => q.$h}px; align-self: center; flex: none; background: #fff; border: 1px solid #b4b4b4;
  display: flex; align-items: center; justify-content: space-between; padding: 0 3px 0 2px; letter-spacing: -0.15px;
`;
const Down = styled.i`border: 2.5px solid transparent; border-top: 3px solid #666; border-bottom: 0;`;
const Fields = styled.div<{ $cols: string }>`
  display: grid; grid-template-columns: ${(q) => q.$cols}; grid-template-rows: 13.5px 13px; align-content: center; align-items: center;
  font: 7.6px/1 ${tahoma}; letter-spacing: -0.15px; color: #333; flex: none;
`;
const Val = styled.span`background: #fbfbfb; height: 12px; border-bottom: 1px solid #bbb; padding: 2.5px 4px 0; font-size: 7.6px; letter-spacing: 0; color: #111;`;
const BarLabel = styled.b<{ $w: number }>`width: ${(q) => q.$w}px; align-self: center; flex: none; font-weight: 700; letter-spacing: -0.5px;`;

const tools = (names: string, hl = '', s = 19) =>
  names.split(' ').map((n, i) =>
    n === '|' ? <Sep key={i} /> : <Tool key={i} $hl={hl.split(' ').includes(n)}><Icon n={n} s={s} /></Tool>,
  );
const More = () => (
  <Overflow>
    <Svg $s={6} viewBox="0 0 6 6"><path d="M1 .5L3 2.5L5 .5M1 3.5L3 5.5L5 3.5" stroke="#666" fill="none" strokeWidth=".8" /></Svg>
    <Down />
  </Overflow>
);

/* ---------- workspace ---------- */
const Work = styled.main`height: 519px; display: flex; flex: none; background: #efefef;`;
const Palettes = styled.div`width: 72px; padding: 4px 0 0 1px; display: flex; align-items: flex-start; gap: 0.5px; flex: none; background: #eeeeed;`;
const Palette = styled.div<{ $top: number }>`
  width: 23px; border: 1px solid #dcdcdc; border-top: 0; display: flex; flex-direction: column; padding-top: ${(q) => q.$top}px;
  background: repeating-conic-gradient(#d2d2d2 0 25%, #efefef 0 50%) 0 0 / 2px 2px;
`;
const PTool = styled.span<{ $hl?: boolean }>`
  height: 21.15px; display: flex; align-items: center; justify-content: center; background: ${(q) => (q.$hl ? '#fce3a4' : '#f0f0f0')};
`;
const PSep = styled.i`height: 4px; display: flex; align-items: center; background: #f0f0f0; &::after { content: ''; height: 1px; width: 100%; background: #b0b0b0; }`;
const palette = (names: string, hl = '') =>
  names.split(' ').map((n, i) => (n === '|' ? <PSep key={i} /> : <PTool key={i} $hl={n === hl}><Icon n={n} s={18} /></PTool>));

const Docs = styled.section`width: 360px; display: flex; flex-direction: column; flex: none;`;
const DocTabs = styled.div`height: 16px; background: #dadada; display: flex; align-items: stretch; padding: 1px 0 0 1px; flex: none;`;
const DocTab = styled.span<{ $w: number; $on?: boolean }>`
  width: ${(q) => q.$w}px; display: flex; align-items: center; justify-content: space-between; padding: 1px 3px 0 3px;
  background: ${(q) => (q.$on ? '#fbe3a2' : '#efefef')}; border: 1px solid #c2c2c2; border-bottom: 0; border-radius: 2px 2px 0 0;
`;
const Arrows = styled.span`margin-left: auto; display: flex; align-items: center; gap: 5px; padding-right: 2px;`;
const Frame = styled.div`
  flex: 1; min-height: 0; border: 1.5px solid #e9d9a0; border-left-color: #c8bf8e; outline: 1px solid #fbf3d0; outline-offset: -3px; background: #efefef; padding: 2px 0 0 2px;
`;
const Divider = styled.i`width: 4px; background: #868686; flex: none; border-left: 1px solid #c9c9c9; border-right: 1px solid #c4c4c4;`;
const Drawing = styled.svg`display: block;`;

const Sheet = () => {
  const cx = 177.3, cy = 249;
  const W = 355, H = 500;
  const ticks: React.ReactElement[] = [];
  for (let i = -9; i <= 9; i++) {
    const x = cx + i * 16.75;
    if (x < 340) ticks.push(<path key={`x${i}`} d={`M${x} ${i === 0 ? 0 : i % 5 === 0 ? 7 : 9}V12.5`} stroke="#222" strokeWidth=".9" />);
  }
  for (let i = -13; i <= 13; i++) {
    const y = cy + i * 16.95;
    ticks.push(<path key={`y${i}`} d={`M${i % 10 === 0 ? 1 : i % 5 === 0 ? 7 : 9} ${y}H13`} stroke="#222" strokeWidth=".9" />);
  }
  const ink = { fontFamily: 'Open Sans', fontSize: 8.4, fill: '#333' };
  return (
    <Drawing width={W} height={H} viewBox={`0 0 ${W} ${H}`}>
      <rect x="13.5" y="13" width="327.5" height="471.5" fill="#dedede" />
      <path d="M13.5 1V484M.5 12.8H341M.5 1V12.8M.5 1H354M354 1V5H342M.5 485V496H5V485M9 470H13" stroke="#333" fill="none" />
      <path d="M3 9H11M7.5 4V11" stroke="#777" strokeWidth=".8" />
      {ticks}
      <text x="13.5" y="8.5" {...ink}>100</text>
      <text x="178.5" y="8.5" {...ink}>0</text>
      <text transform="translate(8.5 78)rotate(-90)" {...ink}>100</text>
      <text transform="translate(8.5 247)rotate(-90)" {...ink}>0</text>
      <text transform="translate(8.5 418)rotate(-90)" {...ink}>-100</text>
      <ellipse cx="177.6" cy="248.5" rx="157.6" ry="159.4" fill="none" stroke="#b03ac4" strokeWidth="1.4" />
      <ellipse cx="177.6" cy="248.5" rx="157.6" ry="159.4" fill="none" stroke="#6a1880" strokeWidth=".9" strokeDasharray="2.5 2.5" />
      {[[20, 89.5], [335, 89.5], [20, 408], [335, 408]].map(([x, y], i) => <rect key={i} x={x - 2.2} y={y - 2.2} width="4.4" height="4.4" fill="#111" />)}
      {[[20, 249], [335, 248.5], [177.6, 408]].map(([x, y], i) => (
        <g key={i}><rect x={x - 2.2} y={y - 2.2} width="4.4" height="4.4" fill="#123a16" /><rect x={x - 1} y={y - 1} width="2" height="2" fill="#5a9a5c" /></g>
      ))}
      <path d="M172 89.3H184M178 83.5V95" stroke="#111" strokeWidth="2.6" />
      <path d="M173.5 89.3H182.5M178 84.5V94" stroke="#e8e8e8" strokeWidth=".9" />
      <path d="M171 249H183M177 243V255" stroke="#c8323a" />
      <rect x="173.2" y="245.2" width="7.6" height="7.6" fill="none" stroke="#c8323a" />
      <path d="M347.5 214V276M158 490.5H189" stroke="#777" strokeWidth="1.4" />
      <path d="M352 488V495M350 490V495M348 492V495" stroke="#bbb" strokeDasharray="1 1" />
    </Drawing>
  );
};

const Panel = styled.section<{ $w: number }>`width: ${(q) => q.$w}px; flex: none; display: flex; flex-direction: column; padding: 2px 0 0;`;
const PanelHead = styled.div`
  height: 16px; background: #cdcdcd; color: #fff; font-weight: 600; font-size: 8.8px; display: flex; align-items: center; padding: 1px 5px 0 3px; gap: 6px; flex: none;
  & > span { margin-right: auto; }
`;
const Close = ({ c: col = '#111', s = 6 }: { c?: string; s?: number }) => (
  <Svg $s={s} viewBox="0 0 8 8"><path d="M1 1L7 7M7 1L1 7" stroke={col} strokeWidth="1.6" /></Svg>
);
const TabRows = styled.div`margin: 8px 4px 0 8px; height: 39px; flex: none; border-left: 1px solid #ddd;`;
const TabRow = styled.div<{ $h: number }>`display: flex; height: ${(q) => q.$h}px; border-top: 1px solid #dfdfdf;`;
const PTab = styled.span<{ $w: number; $on?: boolean }>`
  width: ${(q) => q.$w}px; display: flex; align-items: center; justify-content: center; gap: 2px; font-size: 8.7px;
  background: ${(q) => (q.$on ? '#fbe3a2' : 'transparent')}; border-right: 1px solid #8a8a8a; position: relative;
`;
const Pointer = styled.span`position: absolute; left: 28px; top: 4px;`;
const PBody = styled.div`
  margin: 0 5px 0 7px; height: 427px; flex: none; border: 2px solid #f6e7a8; border-right: 2px solid #cfc58f; border-bottom: 2px solid #a8a07a; background: #eeeeee; padding: 8px 11px 0 7px;
`;
const PropCombo = styled.div`
  width: 133px; height: 15px; background: #fff; border: 1px solid #a8a8a8; display: flex; justify-content: flex-end;
  & > i { width: 12px; background: #ededed; display: flex; align-items: center; justify-content: center; &::after { content: ''; width: 2px; height: 2px; background: #bbb; } }
`;
const Muted = styled.div<{ $h: number; $x: number }>`
  height: ${(q) => q.$h}px; padding-left: ${(q) => q.$x}px; display: flex; align-items: flex-end; font: 7.9px/11px ${tahoma}; letter-spacing: -0.15px; color: #a0a0a0;
`;
const PRow = styled.div<{ $mt: number }>`
  margin-top: ${(q) => q.$mt}px; height: 14px; display: grid; grid-template-columns: 46px 5px 28px 12.5px auto; align-items: center; font: 7.9px/11px ${tahoma}; letter-spacing: -0.15px; color: #a0a0a0;
  & > b { font-weight: 400; text-align: right; }
`;
const Num = styled.span`grid-column: 3; background: #f3f3f3; color: #555; padding-left: 4px; letter-spacing: 0;`;
const Spin = styled.span`
  width: 12.5px; height: 13.5px; border: 1px solid #c2c2c2; border-top-color: #ddd; display: flex; align-items: center; justify-content: center;
`;
const HLine = styled.hr<{ $mt: number }>`border: 0; height: 1px; background: #9c9c9c; margin: ${(q) => q.$mt}px 0 0 1px;`;
const Check = styled.div<{ $mt: number }>`
  margin-top: ${(q) => q.$mt}px; height: 10px; padding-left: 5px; display: flex; align-items: center; gap: 2.5px; color: #111; font-size: 8.4px;
`;
const Box = styled.i`width: 9px; height: 9px; border-radius: 1.5px; background: #0f64b8; display: flex; align-items: center; justify-content: center;`;
const Settings = styled.div`margin-top: 6px; display: flex; align-items: center; gap: 3px; font: 7.9px/12px ${tahoma}; letter-spacing: 0; color: #a0a0a0; padding-left: 1px;`;
const Mini = styled.span`width: 12px; height: 12px; background: #fff; border: 1px solid #ddd; border-radius: 2px; color: #111; font-weight: 700; text-align: center; line-height: 9px;`;
const Actions = styled.div`display: flex; padding: 8px 0 0 15px;`;
const Btn = styled.span<{ $w: number; $ml?: number }>`
  width: ${(q) => q.$w}px; margin-left: ${(q) => q.$ml ?? 0}px; height: 13px; background: #fdfdfd; border: 1px solid #d0d0d0; border-radius: 2px;
  text-align: center; line-height: 11px; font-size: 8.1px; color: #111;
`;
const Prop = ({ mt, label, v, u }: { mt: number; label: string; v: string; u?: string }) => (
  <PRow $mt={mt}>
    <b>{label}</b><Num>{v}</Num>
    <Spin><Svg $s={9} viewBox="0 0 9 9"><path d="M4.5 .5L7 3.5H2ZM4.5 8.5L7 5.5H2Z" fill="#777" /></Svg></Spin>
    <span> {u}</span>
  </PRow>
);

const ListHead = styled.div`height: 19px; display: flex; align-items: center; padding: 1px 0 0 5px; flex: none; font-size: 8.2px; letter-spacing: -0.2px;`;
const Col = styled.span<{ $w: number }>`width: ${(q) => q.$w}px; text-align: center; flex: none;`;
const Locate = styled.span`width: 26px; height: 12px; margin: 0 6px 0 19px; background: #f9f9f9; border: 1px solid #ddd; border-radius: 2px; text-align: center; line-height: 10px;`;
const ListBody = styled.div`
  width: 230px; margin-left: 4.5px; height: 476px; flex: none; background: #c0c0c0; border: 1px solid #888; border-top: 1.5px solid #666; border-right: 2px solid #fafafa; border-bottom-color: #fafafa;
  font: 8px/1 ${tahoma}; letter-spacing: -0.15px; color: #333; overflow: hidden;
`;
const LRow = styled.div<{ $h: number }>`
  height: ${(q) => q.$h}px; display: grid; grid-template-columns: 31px 25px 23px 24px 21px 36px auto; align-items: center;
  & > * { border-right: 1px solid #b8b8b8; border-bottom: 1px solid #b5b5b5; height: 100%; display: flex; align-items: center; justify-content: center; }
  & > :last-child { border-right: 0; }
`;
const Swatch13 = styled.span`width: 15px; height: 16px; margin-left: 9px; background: #8000d0; border: 1px solid #2a10b8; color: #f4d8ff; line-height: 14px; text-align: center;`;
const Rail = styled.aside`flex: 1; background: #d2d2d2; margin-left: 1px; display: flex; flex-direction: column; gap: 10px; padding: 4px 0 0 2px;`;
const RailTab = styled.div<{ $h: number }>`
  height: ${(q) => q.$h}px; width: 14px; background: #fbe8b0; border: 1px solid #b5a980; border-right: 0; border-radius: 2px 0 0 2px;
  display: flex; flex-direction: column; align-items: center; padding-top: 2px; gap: 1px;
  & > span { writing-mode: vertical-rl; font-size: 9px; letter-spacing: -0.45px; line-height: 11px; color: #222; }
`;

/* ---------- bottom ---------- */
const ColorBar = styled.div`height: 27px; width: 813px; display: flex; background: #efefef; align-items: stretch; flex: none; border-top: 1px solid #d8d8d8; overflow: hidden;`;
const Strip = styled.div`background: #d0d0d0; flex: none; width: 100%;`;
const Chip = styled.span<{ $c: string; $fg: string; $sel?: boolean }>`
  width: 20px; height: 20px; margin: 0 1.98px; align-self: center; background: ${(q) => q.$c}; color: ${(q) => q.$fg}; flex: none;
  display: flex; align-items: center; justify-content: center; font: 8px/1 ${tahoma}; position: relative;
  ${(q) => q.$sel && 'border: 1px solid #ddd; outline: 2px solid #000; width: 17px; height: 18px; margin: 0 3.48px; &::after { content: ""; position: absolute; right: -3px; top: -3px; width: 6px; height: 6px; background: #1414f0; }'}
`;
const Current = styled.span`width: 23px; height: 23px; margin: 0 3px 0 2px; align-self: center; background: #0a9a0a; color: #cff0cf; display: flex; align-items: center; justify-content: center; flex: none;`;
const Status = styled.div`height: 28px; display: grid; grid-template-columns: 231px 186px auto; grid-template-rows: 14px 14px; padding: 1px 0 0 2px; align-items: center; color: #222;`;
const Used = styled.span`grid-column: 3; padding-left: 163px;`;
const Taskbar = styled.footer`
  height: 34px; background: linear-gradient(90deg, #f9e9d8, #f7e7da 50%, #f5e2dc 75%, #f3e4e4); border-top: 1px solid #e2d8cc; display: flex; align-items: center; flex: none; padding-left: 15px;
`;
const Weather = styled.div`width: 160px; padding-left: 6px; font: 8px/12px ${ui}; letter-spacing: -0.1px; color: #333; & > div { color: #666; font-family: "DejaVu Sans"; font-size: 8.2px; }`;
const Search = styled.div`width: 153px; height: 21px; border-radius: 11px; background: #fdf8f3; margin-left: 9px; display: flex; align-items: center; padding: 0 3px 0 8px; gap: 6px; font-size: 10.4px; color: #555;`;
const Dock = styled.div`display: flex; margin-left: 1.5px;`;
const DockItem = styled.span<{ $bar?: string; $on?: boolean }>`
  width: 31.1px; height: 26px; display: flex; align-items: center; justify-content: center; position: relative;
  ${(q) => q.$on && 'background: rgba(255,255,255,.65); width: 26px; margin-left: 2px; border-radius: 2px;'}
  ${(q) => q.$bar && `&::after { content: ''; position: absolute; bottom: 0; width: ${q.$on ? 11 : 4}px; height: 1.6px; background: ${q.$bar}; }`}
`;
const Tray = styled.div`display: flex; align-items: center; margin-left: 47px; font-size: 8.8px; letter-spacing: -0.15px; color: #333;`;
const Clock = styled.div`text-align: right; line-height: 12px; width: 47px; font-size: 8.7px;`;

const chips: [string, string][] = [
  ['#0a940a', '#d8f0d8'], ['#0000fa', '#dde'], ['#fa0505', '#fdd'], ['#fdfd05', '#333'], ['#30c8c8', '#244'], ['#c400c4', '#fdf'], ['#05fa05', '#262'], ['#000', '#eee'],
  ['#fff', '#222'], ['#00008c', '#dde'], ['#8c0000', '#fdd'], ['#fa9838', '#532'], ['#8a10c8', '#ffd8ff'], ['#8c5a28', '#f4e4d4'], ['#fc70c4', '#523'],
];
const menu: [string, number][] = [['File', 35], ['Edit', 19], ['View', 36], ['Design', 32], ['Object', 44], ['Arrange', 35], ['Function', 53], ['Stitch', 26], ['Graphics', 54], ['Setup', 24], ['Window', 54], ['Help', 21]];

export default function App() {
  return (
    <Screen>
      <Global />
      <Window>
        <TitleBar>
          <Icon n="app" s={12} />
          <TitleText><span>(Ultimate Special Edition) (Ultimate Special Edition) (Ultimate Special Edition) (Ultimate Special Edition) - [Design3</span><span>Tajima]</span></TitleText>
          <WinButtons>
            <Svg $s={8} viewBox="0 0 8 8"><path d="M1 5H7" stroke="#111" strokeWidth="1.4" /></Svg>
            <Svg $s={8} viewBox="0 0 8 8"><path d="M.7 3H5.3V7.3H.7ZM2.6 3V.7H7.3V5H5.3" fill="none" stroke="#111" strokeWidth="1.2" /></Svg>
            <Close s={9} />
          </WinButtons>
        </TitleBar>
        <MenuBar>{menu.map(([m, w]) => <MenuItem key={m} $w={w}>{m}</MenuItem>)}</MenuBar>

        <Toolbar $h={24}>
          <Grip $w={6.5} />
          {tools('home w | balloon convert | folders', 'w')}
          <Grip $w={8.5} />
          {tools('new open recent')}<Caret $w={5} />
          {tools('save export print preview | cut copy paste | undo')}<Caret $w={6} />
          {tools('redo')}<Caret $w={8} /><Sep />
          {tools('mach1 mach2 mach3 | cup sew up1 up2 |')}<Space $w={1} />
          <Combo $w={59} $h={17}>71<Down /></Combo><Space $w={1} /><Tool $w={9}>%</Tool><Sep $w={3} />
          {tools('dialog')}<Grip $w={9} />
          {tools('info bust props list threads spool dotgrid people stamp clip', 'props list')}
        </Toolbar>

        <Toolbar $h={29} $pt={1.5}>
          <Grip $w={8} />
          <Fields $cols="43px 36px 15px"><span>Position X:</span><Val>0.13</Val><span> mm</span><span>Position Y:</span><Val>0.13</Val><span> mm</span></Fields>
          <Sep $w={8} />
          <Fields $cols="28px 35px 23px 35px 12px"><span>Width:</span><Val>188.46</Val><span> mm</span><Val>100.00</Val><span> %</span><span>Height:</span><Val>188.07</Val><span> mm</span><Val>100.00</Val><span> %</span></Fields>
          <Tool $w={19}><Icon n="lock2" s={17} /></Tool><Grip $w={9} />
          {tools('mirh mirv mird | rotl rotr')}<Space $w={33} /><More /><Space $w={0.5} /><Grip $w={9} />
          {tools('leafA | leafB leafC leafD dashpt fork fish | picture shapes star | horseshoe shirt trefoil | hoop grid gridr |', 'leafA leafB leafC dashpt fork shapes horseshoe trefoil gridr')}
          <Combo $w={41} $h={16}>Metric<Down /></Combo>
          {tools('hoopn curve | bustgo')}
        </Toolbar>

        <Toolbar $h={23} $pt={2.5}>
          <Grip $w={10} />
          <BarLabel $w={37.5}>Outlines:</BarLabel>
          {tools('o1 o2 o3 o4 o5 o6 o7 | o8', 'o1')}<Space $w={3.5} /><More /><Grip $w={11.5} />
          <BarLabel $w={19.5}>Fills:</BarLabel>
          {tools('f1 f2 f3 f4 | f5 f6 f7 f8 f9 f10')}<Space $w={20.5} /><More /><Grip $w={8.5} />
          {tools('g1 g2 g3 g4 g5 g6 g7 g8 g9 g10 g11 g12 g13 g14 g15 g16', 'g3', 18.5)}<Tool $w={19}><Icon n="g17" s={19} /></Tool><Sep $w={4} />{tools('band')}
        </Toolbar>

        <Work>
          <Palettes>
            <Palette $top={7}>{palette('pick reshape coins | A people badge | target hexT hexS hexB hexG knife book padlock overlap', 'pick')}</Palette>
            <Palette $top={5}>{palette('c1 c2 c3 | rect ell shp | squig blob | arch | pac | shoe')}</Palette>
            <Palette $top={5}>{palette('run smile rings | mtn house pipe | bb yy | wheel spokes | poly | tri pts')}</Palette>
          </Palettes>

          <Docs>
            <DocTabs>
              <DocTab $w={53}>kashei al<Close /></DocTab>
              <DocTab $w={78}>univerty DAHER<Close /></DocTab>
              <DocTab $w={48}>Design2<Close /></DocTab>
              <DocTab $w={49} $on>Design3<Close /></DocTab>
              <Arrows>
                <Svg $s={6} viewBox="0 0 6 6"><path d="M4.5 .5L1.5 3L4.5 5.5Z" fill="none" stroke="#444" /></Svg>
                <Svg $s={6} viewBox="0 0 6 6"><path d="M1.5 .5L4.5 3L1.5 5.5Z" fill="none" stroke="#444" /></Svg>
              </Arrows>
            </DocTabs>
            <Frame><Sheet /></Frame>
          </Docs>
          <Divider />

          <Panel $w={204}>
            <PanelHead><span>Object Properties</span><Icon n="pin" s={8} /><Close c="#fff" s={7} /></PanelHead>
            <TabRows>
              <TabRow $h={14}><PTab $w={63}><Icon n="pull" s={10} />Pull Comp</PTab><PTab $w={61}><Icon n="bling" s={10} />Bling Run</PTab><PTab $w={61}><Icon n="blings" s={10} />Bling Fills</PTab></TabRow>
              <TabRow $h={12}><PTab $w={87}><Icon n="under" s={10} />Underlay</PTab><PTab $w={98}><Icon n="conn" s={9} />Connectors</PTab></TabRow>
              <TabRow $h={13}><PTab $w={63}><Icon n="starO" s={10} />Special</PTab>
                <PTab $w={54} $on><Icon n="fillI" s={11} />Fills
                  <Pointer><Svg $s={13} viewBox="0 0 13 13"><path d="M1.5 .5V10.5L4 8.3L5.8 12.3L7.6 11.5L5.9 7.7H9Z" fill="#fff" stroke="#222" strokeWidth=".9" /></Svg></Pointer>
                </PTab>
                <PTab $w={68}><Icon n="outl" s={11} />Outlines</PTab></TabRow>
            </TabRows>
            <PBody>
              <PropCombo><i /></PropCombo>
              <Muted $h={28} $x={35}>Stitch values</Muted>
              <Prop mt={5} label="Spacing:" v="0.38" u="mm" />
              <HLine $mt={5} />
              <Check $mt={4}><Box><Svg $s={7} viewBox="0 0 8 8"><path d="M1.5 4L3.3 6L6.5 2.2" stroke="#9cf" fill="none" /></Svg></Box>Auto spacing</Check>
              <Prop mt={6} label="Adjust:" v="90" u="%" />
              <Settings><Mini>&lt;</Mini>Settings...</Settings>
              <HLine $mt={7} />
              <Muted $h={17} $x={38}>Satin count</Muted>
              <Prop mt={5.5} label="Adjust:" v="1" />
              <HLine $mt={8.5} />
              <Check $mt={3} ><Box><Svg $s={7} viewBox="0 0 8 8"><path d="M1.5 4L3.3 6L6.5 2.2" stroke="#9cf" fill="none" /></Svg></Box>Auto split</Check>
              <Prop mt={8.5} label="Length:" v="7.00" u="mm" />
              <Prop mt={6.5} label="Min length:" v="0.40" u="mm" />
            </PBody>
            <Actions><Btn $w={51}>Effects</Btn><Btn $w={24} $ml={41}>Save</Btn><Btn $w={13} $ml={5}>?</Btn></Actions>
          </Panel>
          <Divider />

          <Panel $w={239}>
            <PanelHead><span>Color-Object List</span><Icon n="pin" s={8} /><Close c="#fff" s={7} /></PanelHead>
            <ListHead>
              <Svg $s={7} viewBox="0 0 7 7"><path d="M1 3L3.5 .8L6 3M1 6L3.5 3.8L6 6" stroke="#888" fill="none" strokeWidth=".9" /></Svg>
              <Locate>Locate</Locate><Col $w={18}>#</Col><Col $w={48}>Object Type</Col><Col $w={33}>Stitches</Col>
            </ListHead>
            <ListBody>
              <LRow $h={15}><span> 1</span><span /><span> 1</span><span /><span /><span>237</span><span /></LRow>
              <LRow $h={27}>
                <span><Swatch13>13</Swatch13></span>
                <span><Svg $s={24} viewBox="0 0 24 24"><rect x="1" y="1" width="22" height="22" fill="#b6b2d6" stroke="#1010c8" strokeWidth="1.6" /><circle cx="12" cy="12" r="10.3" fill="none" stroke="#8a30b8" /><path d="M0 12H12" stroke="#777" /></Svg></span>
                <span>1</span>
                <span><Svg $s={20} viewBox="0 0 20 20"><path d="M3 17L17 3" stroke="#d8584c" strokeWidth="1.3" /><circle cx="3" cy="17" r="1.4" /><circle cx="17" cy="3" r="1.4" /><circle cx="8" cy="12" r="1.2" fill="#fff" /><circle cx="12" cy="8" r="1.2" fill="#fff" /><text x="13" y="16" fontSize="8" fontFamily="Open Sans" fontWeight="600">1</text></Svg></span>
                <span><Svg $s={18} viewBox="0 0 20 20"><path d="M1 10H19" stroke="#d8584c" strokeWidth="1.4" strokeDasharray="4 1.5" /></Svg></span>
                <span>237</span><span />
              </LRow>
              {Array.from({ length: 18 }, (_, i) => <LRow key={i} $h={25.2}><span /><span /><span /><span /><span /><span /><span /></LRow>)}
            </ListBody>
          </Panel>
          <Rail>
            <RailTab $h={51}><Icon n="spool" s={12} /><span>Threads</span></RailTab>
            <RailTab $h={89}><Icon n="bust" s={12} /><span>Overview Window</span></RailTab>
            <RailTab $h={91}><Icon n="clip" s={12} /><span>Embroidery Clipart</span></RailTab>
          </Rail>
        </Work>

        <Strip>
          <ColorBar>
            <Grip $w={7} />
            <Combo $w={81} $h={17}>Colorway 1<Down /></Combo>
            {tools('threads |')}<Tool><Icon n="mosaic" /></Tool><Caret $w={6} /><Space $w={3.5} />
            {tools('shirts')}<Caret $w={3.5} /><Sep />
            <Current>1</Current><Sep $w={2.5} /><Tool $w={20.7}><Icon n="dropper" s={18} /></Tool><Tool $w={20.7}><Icon n="bucket" s={18} /></Tool>
            {tools('| plus minus', '', 18)}<Sep $w={3.5} />
            {chips.map(([bg, fg], i) => <Chip key={i} $c={bg} $fg={fg} $sel={i === 12}>{i + 1}</Chip>)}
            <Tool $w={15}><Svg $s={16} $w={8} viewBox="0 0 8 16"><path d="M1 3.5L4 .5L7 3.5ZM1 12.5L4 15.5L7 12.5Z" fill="#999" /></Svg></Tool>
            <Sep $w={3} />
            {tools('rem1 rem2 | nofill | ring pie | spool')}
          </ColorBar>
          <Status><span>240</span><span>RUN Length   2.50 mm</span><span>Object 1: Run</span><Used>(used)</Used></Status>
        </Strip>

        <Taskbar>
          <Icon n="sun" s={14} />
          <Weather>36°C<div>مشمس</div></Weather>
          <Icon n="win" s={17} />
          <Search><Icon n="loupe" s={11} /><span>Search</span><Space $w={44} /><Icon n="boat" s={18} vw={35} /></Search>
          <Dock>
            {['tasks', 'snip', 'files', 'edge', 'store', 'chrome', 'fb'].map((n) => (
              <DockItem key={n} $bar={n === 'files' || n === 'chrome' ? '#777' : undefined}><Icon n={n} s={18} /></DockItem>
            ))}
            <DockItem $on $bar="#0a70c8"><Icon n="app" s={18} /></DockItem>
          </Dock>
          <Tray>
            <Tool $w={16}><Icon n="chev" s={10} /></Tool><Space $w={7} /><Tool $w={16}><Icon n="cloud" s={13} /></Tool><Space $w={6} /><Tool $w={16}><Icon n="mic" s={12} /></Tool>
            <Space $w={10} /><span>ENG</span><Space $w={9} /><Tool $w={17}><Icon n="net" s={13} /></Tool><Tool $w={17}><Icon n="vol" s={12} /></Tool>
            <Clock>4:27 PM<br />9/10/2024</Clock><Space $w={4} /><Tool $w={15}><Icon n="bell" s={12} /></Tool><Space $w={8} /><Icon n="copilot" s={17} />
          </Tray>
        </Taskbar>
      </Window>
    </Screen>
  );
}
